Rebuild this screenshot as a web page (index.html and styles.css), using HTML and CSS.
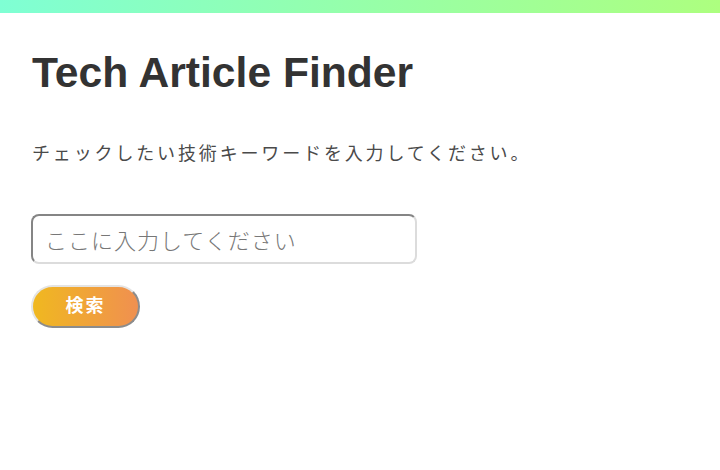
FILE: index.html
```html
<!DOCTYPE html>
<html lang="ja">
<head>
<meta charset="utf-8">
<title>Tech Article Finder</title>
<link rel="stylesheet" href="styles.css">
</head>
<body>
<div class="topbar"></div>
<main class="page">
  <h1 class="title">Tech Article Finder</h1>
  <p class="lead">チェックしたい技術キーワードを入力してください。</p>
  <form class="search">
    <input class="field" type="text" placeholder="ここに入力してください">
    <button class="btn" type="button">検索</button>
  </form>
</main>
</body>
</html>
```

FILE: styles.css
```css
html, body {
  margin: 0;
  padding: 0;
  background: #ffffff;
}
body {
  font-family: "Liberation Sans", "Noto Sans CJK JP", sans-serif;
  color: #333333;
}
.topbar {
  height: 13px;
  background: linear-gradient(to right, #7fffd4, #adff7f);
}
.page {
  padding: 34px 32px 0;
}
.title {
  margin: 0;
  font-size: 42.6px;
  line-height: 50px;
  font-weight: bold;
  color: #333333;
}
.lead {
  margin: 41px 0 0;
  font-family: "Noto Sans CJK JP", sans-serif;
  font-size: 18px;
  line-height: 28px;
  letter-spacing: 2.85px;
  color: #4a4a4a;
}
.search {
  display: flex;
  flex-direction: column;
  align-items: flex-start;
  gap: 21px;
  margin-top: 48px;
}
.field {
  box-sizing: border-box;
  width: 386px;
  height: 50px;
  margin: 0 0 0 -1px;
  padding: 0 12px;
  border: 2px solid #dcdcdc;
  border-top-color: #858585;
  border-left-color: #858585;
  border-radius: 8px;
  font-family: "Noto Sans CJK JP", sans-serif;
  font-size: 22px;
  font-weight: 300;
  letter-spacing: 1px;
  color: #333333;
  background: #ffffff;
}
.field::placeholder {
  color: #777777;
}
.btn {
  box-sizing: border-box;
  width: 109px;
  height: 43px;
  margin-left: -1px;
  padding: 0 0 5px;
  border: 2px solid #8c8c8c;
  border-top-color: #e4e4e4;
  border-left-color: #e4e4e4;
  border-radius: 22px;
  background: linear-gradient(to right, #f0b820, #f09050);
  color: #ffffff;
  font-family: "Noto Sans CJK JP", sans-serif;
  font-weight: bold;
  font-size: 18px;
  letter-spacing: 2px;
  cursor: pointer;
}
```
